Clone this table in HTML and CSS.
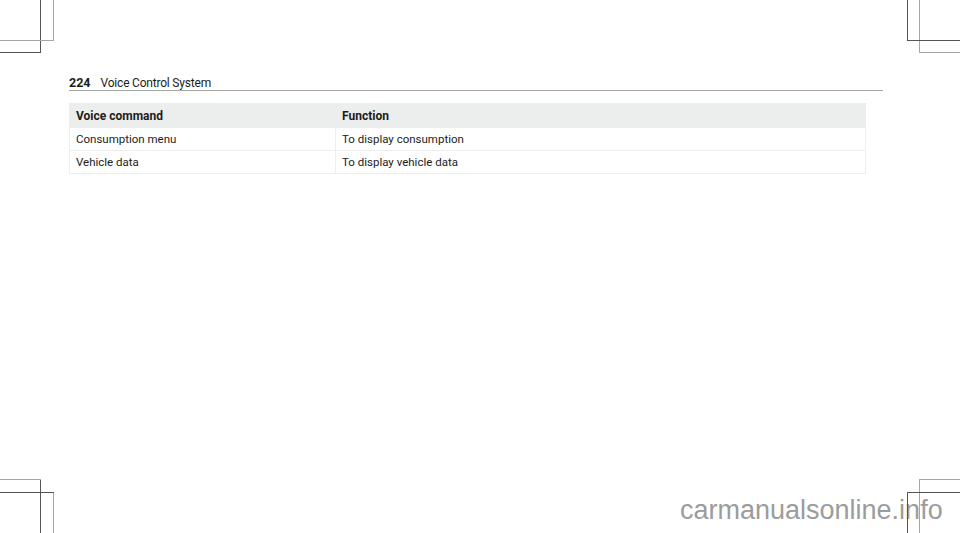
FILE: index.html
```html
<!DOCTYPE html>
<html lang="en">
<head>
<meta charset="utf-8">
<title>Voice Control System</title>
<link rel="stylesheet" href="styles.css">
</head>
<body>
<div class="page">
  <div class="crop crop-tl">
    <span class="ln v v1"></span><span class="ln v v2"></span>
    <span class="ln h h1"></span><span class="ln h h2"></span>
  </div>
  <div class="crop crop-tr">
    <span class="ln v v1"></span><span class="ln v v2"></span>
    <span class="ln h h1"></span><span class="ln h h2"></span>
  </div>
  <div class="crop crop-bl">
    <span class="ln v v1"></span><span class="ln v v2"></span>
    <span class="ln h h1"></span><span class="ln h h2"></span>
  </div>
  <div class="crop crop-br">
    <span class="ln v v1"></span><span class="ln v v2"></span>
    <span class="ln h h1"></span><span class="ln h h2"></span>
  </div>

  <main class="content">
    <header class="running-head">
      <span class="page-num">224</span>
      <span class="section">Voice Control System</span>
    </header>

    <table class="cmd-table">
      <thead>
        <tr><th class="c1">Voice command</th><th>Function</th></tr>
      </thead>
      <tbody>
        <tr><td class="c1">Consumption menu</td><td>To display consumption</td></tr>
        <tr><td class="c1">Vehicle data</td><td>To display vehicle data</td></tr>
      </tbody>
    </table>
  </main>

  <div class="watermark">carmanualsonline.info</div>
</div>
</body>
</html>
```

FILE: styles.css
```css
html, body {
  margin: 0;
  padding: 0;
  background: #ffffff;
}

.page {
  position: relative;
  width: 960px;
  height: 533px;
  overflow: hidden;
  font-family: Roboto, "Liberation Sans", sans-serif;
  color: #1c1c1c;
}

.content {
  padding: 74px 0 0 69px;
}

.running-head {
  display: flex;
  align-items: baseline;
  gap: 10px;
  width: 814px;
  height: 15px;
  padding-top: 1px;
  border-bottom: 1px solid #a3a8a8;
  font-size: 12px;
  line-height: 16px;
}

.page-num {
  font-weight: 700;
  font-size: 12.5px;
}

.section {
  letter-spacing: -0.2px;
}

.cmd-table {
  margin-top: 12px;
  width: 797px;
  border-collapse: collapse;
  font-size: 11.5px;
  table-layout: fixed;
}

.cmd-table th,
.cmd-table td {
  text-align: left;
  padding: 0 0 0 6px;
  height: 22px;
  border: 1px solid #eeeeee;
  vertical-align: middle;
}

.cmd-table th {
  background: #eceeed;
  font-weight: 700;
  font-size: 12px;
  height: 23px;
  border-color: #eceeed;
}

.cmd-table .c1 {
  width: 259px;
}

.watermark {
  position: absolute;
  left: 680px;
  top: 494px;
  font-family: "Liberation Sans", Arial, sans-serif;
  font-size: 27px;
  line-height: 32px;
  color: #9c9c9c;
}

.crop {
  position: absolute;
  width: 60px;
  height: 60px;
  z-index: 2;
}

.ln {
  position: absolute;
  background: #555555;
}

.ln.v { width: 1px; }
.ln.h { height: 1px; }

.crop-tl { left: 0; top: 0; }
.crop-tl .v1 { left: 40px; top: 0; height: 53px; }
.crop-tl .v2 { left: 53px; top: 0; height: 41px; background: #a6a6a6; }
.crop-tl .h1 { left: 0; top: 40px; width: 54px; background: #a6a6a6; }
.crop-tl .h2 { left: 0; top: 52px; width: 41px; }

.crop-tr { right: 0; top: 0; }
.crop-tr .v1 { left: 7px; top: 0; height: 41px; }
.crop-tr .v2 { left: 19px; top: 0; height: 53px; background: #a6a6a6; }
.crop-tr .h1 { left: 7px; top: 40px; width: 53px; }
.crop-tr .h2 { left: 19px; top: 52px; width: 41px; background: #a6a6a6; }

.crop-bl { left: 0; bottom: 0; }
.crop-bl .h1 { left: 0; top: 6px; width: 41px; background: #a6a6a6; }
.crop-bl .v1 { left: 40px; top: 6px; height: 54px; }
.crop-bl .h2 { left: 0; top: 19px; width: 54px; }
.crop-bl .v2 { left: 53px; top: 19px; height: 41px; background: #a6a6a6; }

.crop-br { right: 0; bottom: 0; }
.crop-br .h1 { left: 19px; top: 6px; width: 41px; background: #a6a6a6; }
.crop-br .v2 { left: 19px; top: 6px; height: 54px; background: #a6a6a6; }
.crop-br .h2 { left: 7px; top: 19px; width: 53px; }
.crop-br .v1 { left: 7px; top: 19px; height: 41px; }
```
